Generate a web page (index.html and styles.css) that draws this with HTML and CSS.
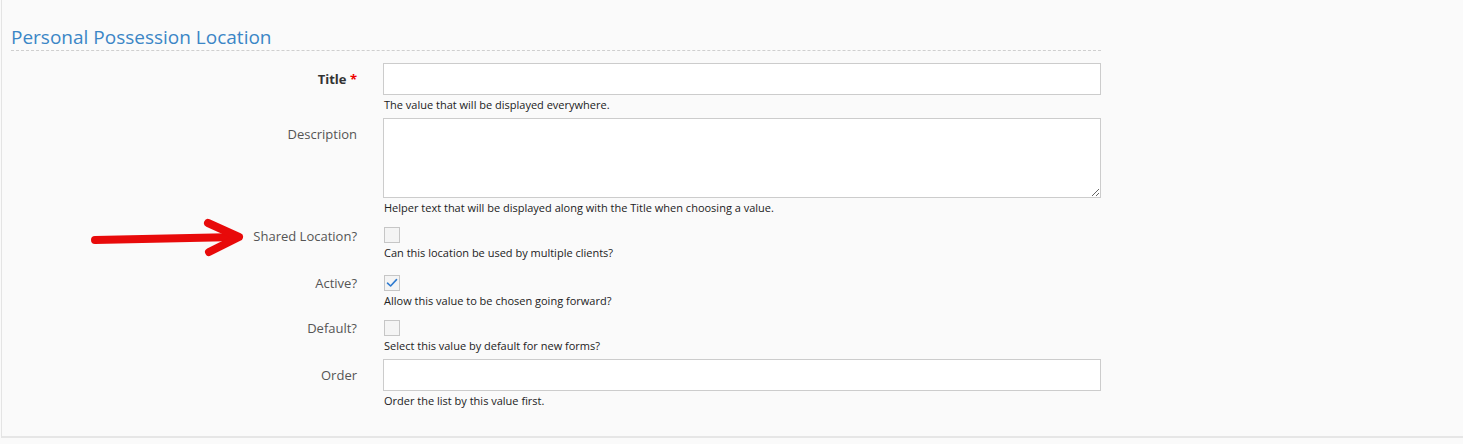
FILE: index.html
```html
<!DOCTYPE html>
<html>
<head>
<meta charset="utf-8">
<link rel="stylesheet" href="styles.css">
</head>
<body>
<div class="panel">
  <h2 class="legend">Personal Possession Location</h2>
  <form class="form">
    <svg class="arrow" width="160" height="40" viewBox="0 0 160 40">
      <path d="M4 22 L146 19" stroke="#e80a0a" stroke-width="8" stroke-linecap="round" fill="none"/>
      <path d="M117 5 L148 19 L118 34" stroke="#e80a0a" stroke-width="8" stroke-linecap="round" stroke-linejoin="round" fill="none"/>
    </svg>
    <div class="row">
      <label class="lbl strong">Title <span class="req">*</span></label>
      <div class="ctl">
        <input class="text" type="text">
        <div class="help">The value that will be displayed everywhere.</div>
      </div>
    </div>
    <div class="row">
      <label class="lbl">Description</label>
      <div class="ctl">
        <textarea class="area"></textarea>
        <div class="help">Helper text that will be displayed along with the Title when choosing a value.</div>
      </div>
    </div>
    <div class="row check-row shared">
      <label class="lbl">Shared Location?</label>
      <div class="ctl">
        <span class="box"></span>
        <div class="help">Can this location be used by multiple clients?</div>
      </div>
    </div>
    <div class="row check-row active">
      <label class="lbl">Active?</label>
      <div class="ctl">
        <span class="box"><svg width="14" height="14" viewBox="0 0 14 14"><path d="M2.5 7.2 L5.6 10 L11.5 3.6" stroke="#2f7bd0" stroke-width="1.6" fill="none" stroke-linecap="round" stroke-linejoin="round"/></svg></span>
        <div class="help">Allow this value to be chosen going forward?</div>
      </div>
    </div>
    <div class="row check-row default">
      <label class="lbl">Default?</label>
      <div class="ctl">
        <span class="box"></span>
        <div class="help">Select this value by default for new forms?</div>
      </div>
    </div>
    <div class="row order">
      <label class="lbl">Order</label>
      <div class="ctl">
        <input class="text" type="text">
        <div class="help">Order the list by this value first.</div>
      </div>
    </div>
  </form>
</div>
</body>
</html>
```

FILE: styles.css
```css
html, body {
  margin: 0;
  padding: 0;
  background: #fafafa;
  font-family: "Open Sans", "Liberation Sans", sans-serif;
  color: #333;
}
.panel {
  margin-left: 1px;
  border-left: 1px solid #e4e4e4;
  border-bottom: 2px solid #e6e6e6;
  height: 438px;
  box-sizing: border-box;
  padding: 24px 0 0 9px;
}
.legend {
  width: 1090px;
  margin: 0;
  font-size: 19px;
  font-weight: 400;
  line-height: 26px;
  color: #3b86c6;
  border-bottom: 1px dashed #cfcfcf;
}
.form {
  position: relative;
  width: 1090px;
  margin-top: 12px;
}
.arrow {
  position: absolute;
  left: 80px;
  top: 155px;
}
.row {
  display: grid;
  grid-template-columns: 346px 718px;
  column-gap: 26px;
  margin-bottom: 5px;
}
.lbl {
  text-align: right;
  font-size: 13px;
  line-height: 18px;
  padding-top: 7px;
  color: #555;
}
.strong {
  font-weight: 700;
  color: #333;
}
.req {
  color: #e00;
}
.ctl {
  display: flex;
  flex-direction: column;
  align-items: flex-start;
}
.text {
  width: 718px;
  height: 32px;
  box-sizing: border-box;
  border: 1px solid #cccccc;
  background: #fff;
  margin: 0;
  padding: 4px 8px;
  font-family: inherit;
  font-size: 13px;
  outline: none;
}
.area {
  width: 718px;
  height: 80px;
  box-sizing: border-box;
  border: 1px solid #cccccc;
  background: #fff;
  margin: 0;
  padding: 4px 8px;
  font-family: inherit;
  font-size: 13px;
  resize: vertical;
  display: block;
}
.help {
  font-size: 11px;
  line-height: 16px;
  margin-top: 2px;
  padding-left: 1px;
  color: #222;
}
.box {
  width: 16px;
  height: 16px;
  box-sizing: border-box;
  border: 1px solid #c6c6c6;
  background: #f4f4f4;
  margin: 7px 0 0 1px;
  display: flex;
  align-items: center;
  justify-content: center;
}
.shared .box { margin-top: 6px; }
.shared .lbl { padding-top: 6px; }
.active .box { margin-top: 9px; }
.active .lbl { padding-top: 8px; }
.default .box { margin-top: 6px; }
.default .lbl { padding-top: 5px; }
.order { margin-top: 2px; }
```
